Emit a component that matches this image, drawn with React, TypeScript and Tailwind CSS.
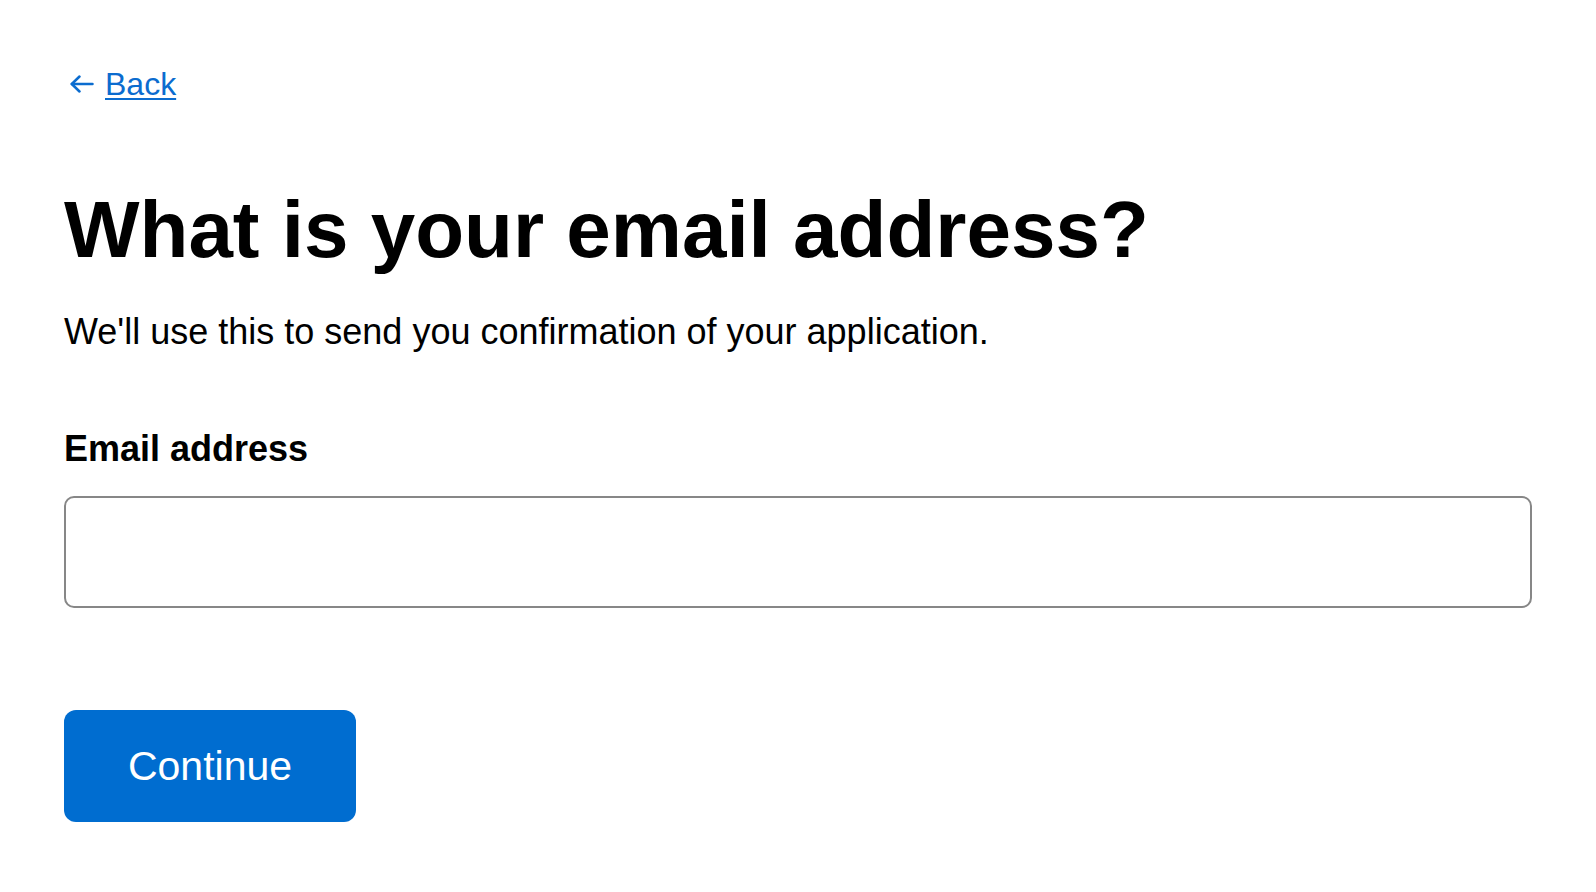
export default function App() {
  return (
    <div
      className="min-h-screen bg-white px-16 pt-[66px] text-black"
      style={{ fontFamily: '"Liberation Sans", Arial, Helvetica, sans-serif' }}
    >
      <a
        href="#"
        className="inline-flex items-center gap-[11px] pl-[6px] text-[32px] leading-[36px] text-[#0b6ccf]"
      >
        <svg width="24" height="18" viewBox="0 0 24 18" fill="none" stroke="currentColor" strokeWidth="2.5" strokeLinecap="round" strokeLinejoin="round">
          <path d="M22.5 9H1.8" />
          <path d="M9.5 1.5L1.8 9l7.7 7.5" />
        </svg>
        <span className="underline decoration-2 underline-offset-[3px]">Back</span>
      </a>

      <h1 className="mt-[88px] text-[80px] font-bold leading-[80px]">What is your email address?</h1>

      <p className="mt-[39px] text-[36px] leading-[45px]">
        We'll use this to send you confirmation of your application.
      </p>

      <label htmlFor="email" className="mt-[72px] block text-[36px] font-bold leading-[45px]">
        Email address
      </label>
      <input
        id="email"
        type="email"
        className="mt-[25px] block h-[112px] w-full rounded-[10px] border-2 border-[#878787] bg-white px-5 text-[36px] outline-none"
      />

      <button
        type="button"
        className="mt-[102px] flex h-[112px] w-[292px] items-center justify-center rounded-[12px] bg-[#006dd0] text-[41px] leading-[41px] text-white"
      >
        Continue
      </button>
    </div>
  );
}
